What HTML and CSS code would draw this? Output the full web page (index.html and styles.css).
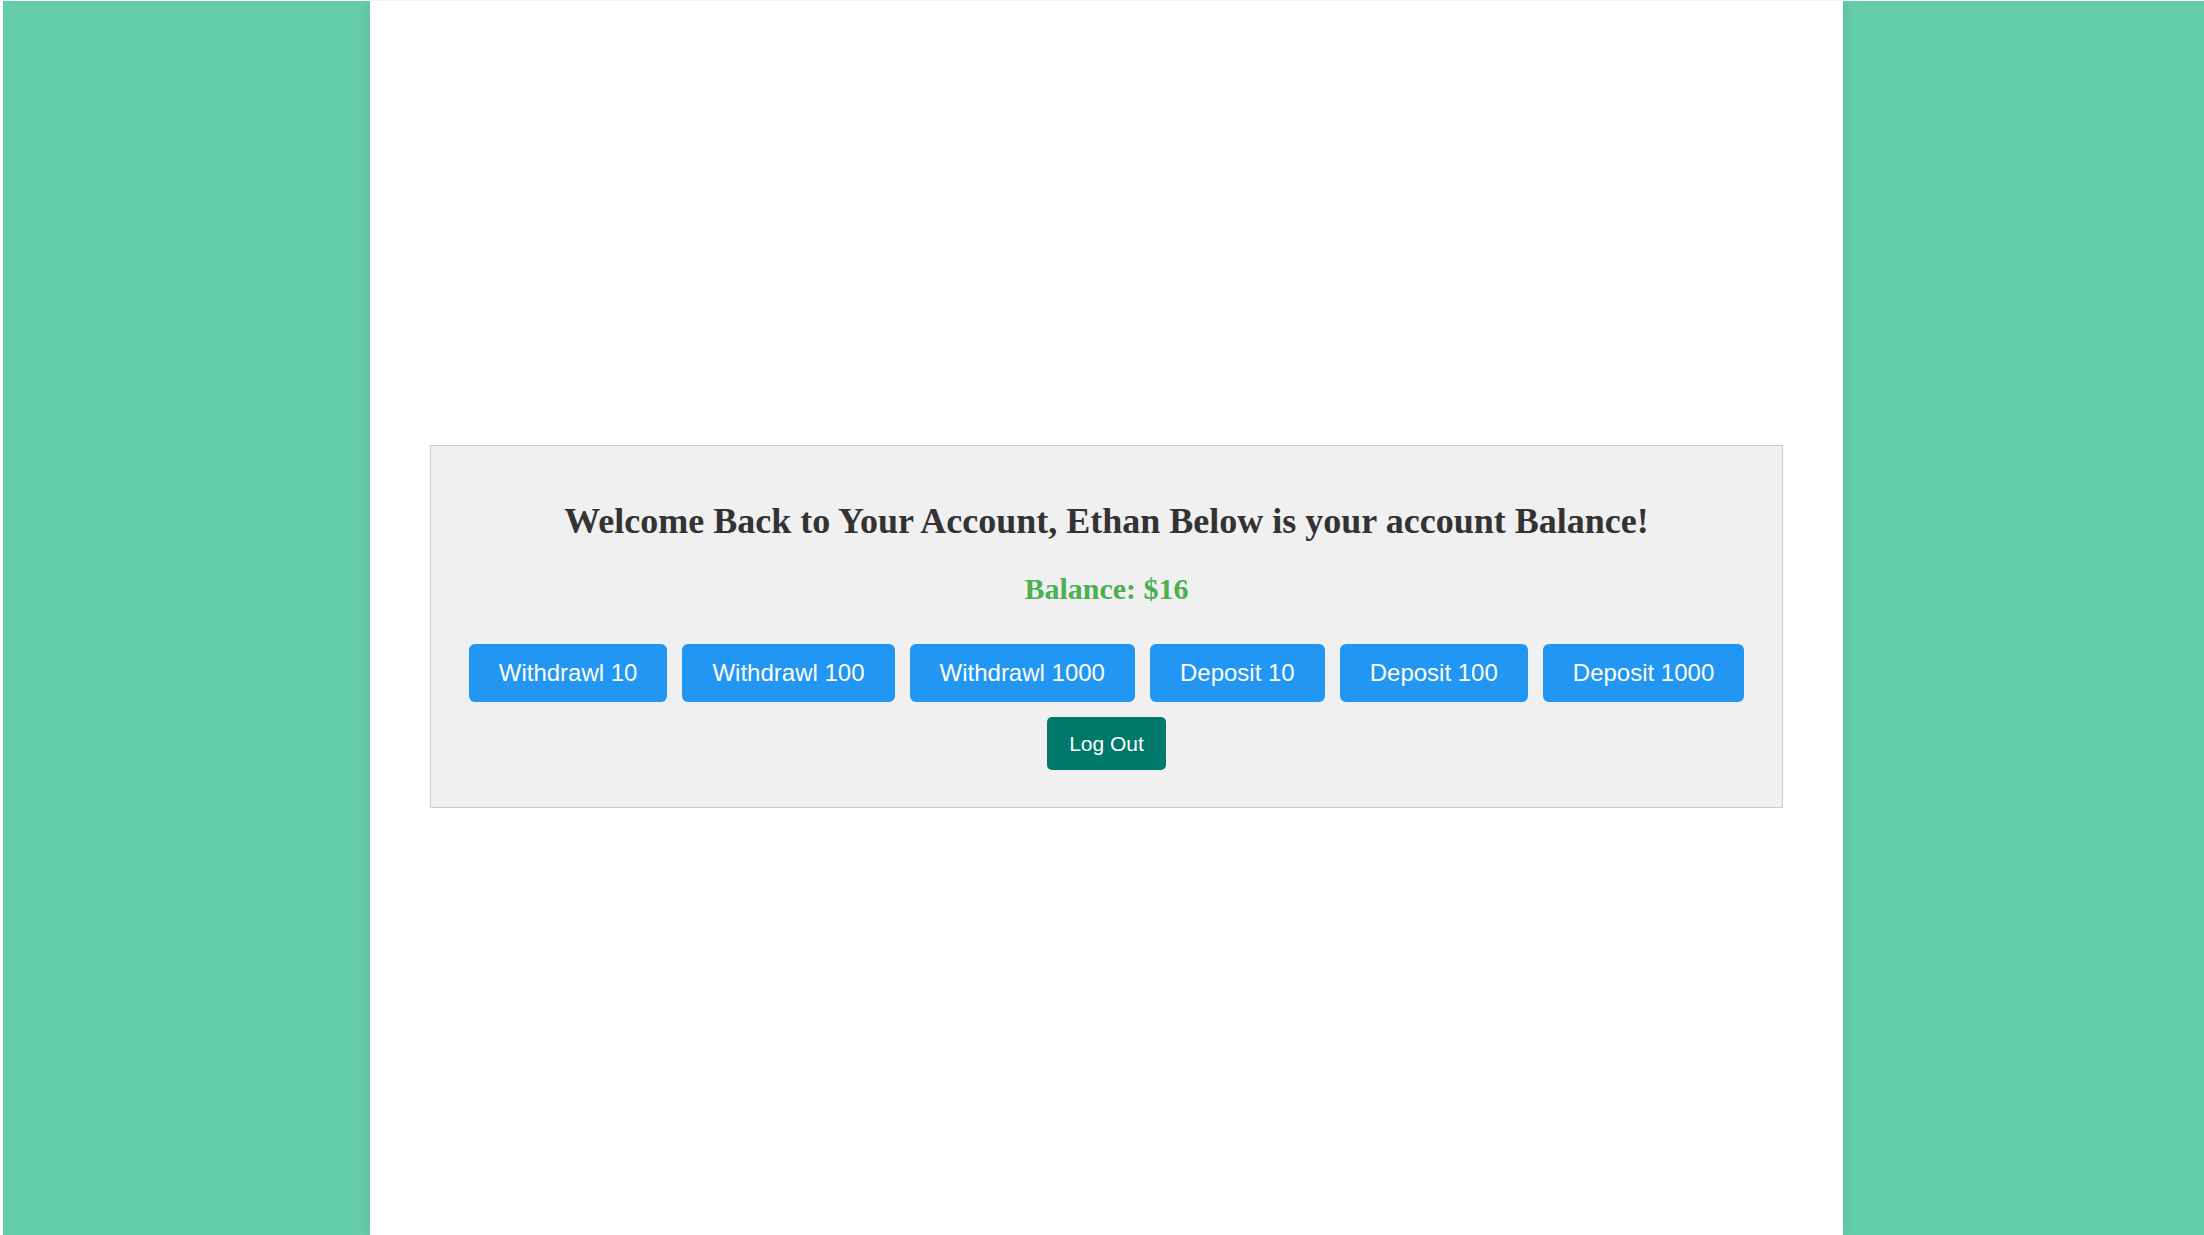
FILE: index.html
```html
<!DOCTYPE html>
<html lang="en">
<head>
<meta charset="utf-8">
<title>Account</title>
<link rel="stylesheet" href="styles.css">
</head>
<body>
<div class="page">
  <aside class="side side-left"></aside>
  <main class="center">
    <section class="card">
      <h2 class="title">Welcome Back to Your Account, Ethan Below is your account Balance!</h2>
      <p class="balance">Balance: $16</p>
      <div class="actions">
        <button class="btn">Withdrawl 10</button>
        <button class="btn">Withdrawl 100</button>
        <button class="btn">Withdrawl 1000</button>
        <button class="btn">Deposit 10</button>
        <button class="btn">Deposit 100</button>
        <button class="btn">Deposit 1000</button>
      </div>
      <div class="logout-row">
        <button class="logout">Log Out</button>
      </div>
    </section>
  </main>
  <aside class="side side-right"></aside>
</div>
</body>
</html>
```

FILE: styles.css
```css
html, body {
  margin: 0;
  height: 100%;
  background: #ffffff;
}

body {
  padding: 1px 0 0 3px;
  box-sizing: border-box;
  overflow: hidden;
}

.page {
  display: flex;
  height: 1234px;
}

.side {
  background: #66cdaa;
}

.side-left {
  width: 367px;
  flex: 0 0 367px;
}

.side-right {
  width: 361px;
  flex: 0 0 361px;
}

.center {
  flex: 1 1 auto;
  min-width: 0;
  background: #ffffff;
  position: relative;
  box-shadow: 0 0 12px rgba(0, 0, 0, 0.12);
  padding: 444px 60px 0;
}

.card {
  background: #f0f0f0;
  border: 1px solid #cccccc;
  padding: 30px 0 37px;
  text-align: center;
}

.title {
  margin: 25px 0 31px;
  font-family: "Liberation Serif", "Times New Roman", serif;
  font-size: 36px;
  line-height: 40px;
  font-weight: bold;
  color: #333333;
  white-space: nowrap;
}

.balance {
  margin: 0 0 39px;
  font-family: "Liberation Serif", "Times New Roman", serif;
  font-size: 30px;
  line-height: 33px;
  font-weight: bold;
  color: #4caf50;
}

.actions {
  display: flex;
  justify-content: center;
  gap: 15px;
  margin-bottom: 15px;
}

.btn {
  flex: 0 0 auto;
  white-space: nowrap;
  background: #2196f3;
  color: #ffffff;
  border: none;
  border-radius: 6px;
  padding: 15px 30px;
  font-family: "Liberation Sans", Arial, sans-serif;
  font-size: 24px;
  line-height: 28px;
  cursor: pointer;
}

.logout-row {
  display: flex;
  justify-content: center;
}

.logout {
  flex: 0 0 auto;
  white-space: nowrap;
  background: #00796b;
  color: #ffffff;
  border: none;
  border-radius: 5px;
  padding: 15px 22px;
  font-family: "Liberation Sans", Arial, sans-serif;
  font-size: 21px;
  line-height: 23px;
  cursor: pointer;
}
```
